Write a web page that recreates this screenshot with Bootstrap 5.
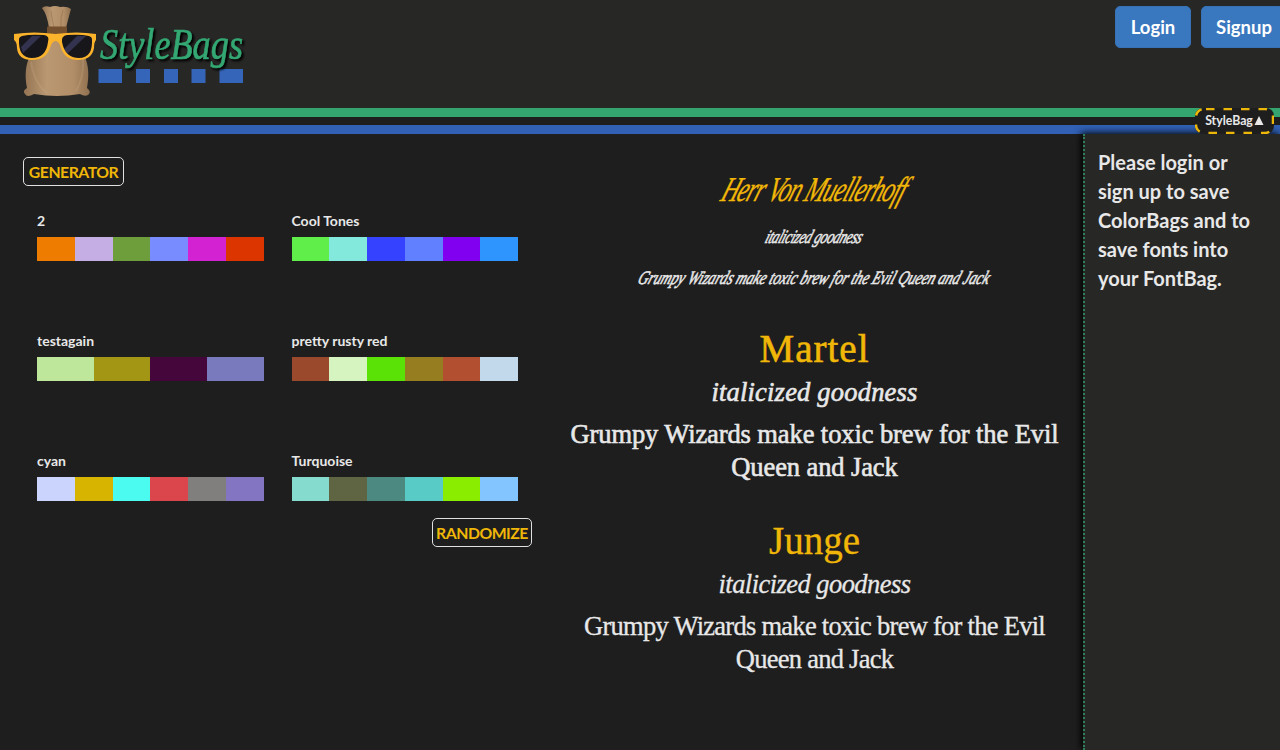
<!DOCTYPE html>
<html lang="en">
<head>
<meta charset="utf-8">
<title>StyleBags</title>
<link href="https://cdn.jsdelivr.net/npm/bootstrap@5.3.0/dist/css/bootstrap.min.css" rel="stylesheet">
<style>
body{background:#1e1e1e;color:#e8e8e8;font-family:Lato,"Open Sans",sans-serif;height:750px;overflow:hidden}
.masthead{height:108px;background:#272726}
.stripe-green{height:9px;background:#34a56f}
.stripe-gap{height:8px;background:#1e1e1e}
.stripe-blue{height:9px;background:#3160b4}
.logo{display:block;width:260px;height:108px;overflow:visible}
.logo text{filter:drop-shadow(2px 2px 1px #000)}
.auth{padding:6px 0 0;margin-right:-7px;gap:10px}
.btn-auth{--bs-btn-color:#fff;--bs-btn-bg:#3977be;--bs-btn-border-color:#3672b5;height:42px;padding:0 14px;border-radius:5px;font-weight:700;font-size:18.5px;line-height:40px;white-space:nowrap}
.btn-login{width:76px}
.btn-signup{width:86px}
.bag-tab{right:6px;top:0;width:79px;height:26px;z-index:3;background:#1e1e1e;border-radius:8px;font-size:12.3px;font-weight:700;line-height:26px}
.bag-tab .dashes{left:0;top:0}
.bag-tab span{position:relative}
.workspace{height:616px}
.palettes{width:546px;padding:23px 14px 0 23px}
.btn-pill{border:1px solid #e0e0e0;border-radius:5px;color:#f1b708;background:transparent;height:29px;width:101px;padding:0;font-size:15.8px;font-weight:700;line-height:28px;letter-spacing:-.5px}
.btn-random{width:100px;margin-top:-53px}
.palette-grid{display:grid;grid-template-columns:226.500px 226.500px;column-gap:28px;grid-auto-rows:120px;margin:25px 0 0 14px}
.palette-name{font-size:14px;font-weight:700;line-height:20px;margin-bottom:6px}
.swatches{height:24px}
.swatches div{flex:1 1 0}
.samples{width:537px}
.samples h2,.samples p{margin:0;white-space:nowrap}
.samples h2{color:#f1b708;font-weight:400}
.serif{font-family:"Liberation Serif",serif}
.script-face{font-family:"Liberation Serif",serif;font-style:italic;height:192px;padding-top:32px;-webkit-text-stroke:.4px}
.script-face h2{font-size:35px;line-height:48px;margin-bottom:2px;letter-spacing:-1.5px;transform:skewX(-20deg) scaleX(.67)}
.script-face p{font-size:19px;line-height:41px;letter-spacing:-.4px;transform:skewX(-20deg) scaleX(.7);-webkit-text-stroke:.6px}
.script-face p.line{letter-spacing:-.1px;transform:skewX(-20deg) scaleX(.75)}
.serif h2{font-size:39px;line-height:46px}
.serif em,.serif p{display:block;font-size:26.5px;line-height:33px}
.serif em{margin:4px 0 9px}
.martel{height:192px;-webkit-text-stroke:.6px}
.martel h2{letter-spacing:1px}
.martel em{letter-spacing:.2px}
.martel p{letter-spacing:-.1px}
.junge{-webkit-text-stroke:.3px}
.junge em{letter-spacing:-.55px}
.junge p{letter-spacing:-.73px}
.bag-panel{width:197px;background:#272726;border-left:2px dotted #2b7f5b;box-shadow:-2px -1px 7px #000;padding:14px 10px 0 13px;z-index:2;font-size:20px;font-weight:700;line-height:29px}
</style>
</head>
<body>
<header class="masthead d-flex justify-content-between">
<svg class="logo" viewBox="0 0 260 108" role="img" aria-label="StyleBags">
<defs>
<linearGradient id="sack"><stop stop-color="#947453"/><stop offset=".35" stop-color="#ba9872"/><stop offset=".75" stop-color="#b18e68"/><stop offset="1" stop-color="#8f704f"/></linearGradient>
</defs>
<path d="M42 8Q45 5 50 7Q55 5 60 7Q67 6 71 9Q70 12 66 28H49Q47 14 42 8Z" fill="url(#sack)"/>
<path d="M51 11Q52 20 54 27M63 10Q60 18 61 27" stroke="#94714f" fill="none" opacity=".6"/>
<path d="M48 33H66C83 48 92 62 87 88Q92 92 88 95Q85 97 80 94Q57 98 34 94Q27 98 25 94Q22 91 27 88C22 62 32 48 48 33Z" fill="url(#sack)"/>
<path d="M31 62Q34 83 47 93M83 59Q84 78 76 91" stroke="#cbad89" stroke-width="2" opacity=".25" fill="none"/>
<rect x="47" y="26.500" width="20" height="7.500" rx="1" fill="#74502e"/>
<path d="M18 38Q20 34 29 34H45Q52 34 50 42Q48 58 35 59H31Q18 59 18 38ZM93 38Q91 34 82 34H66Q59 34 61 42Q63 58 76 59H80Q93 59 93 38Z" fill="#17171b"/>
<path d="M21 47 32 36H41L23 53ZM64 49 77 36H86L67 54Z" fill="#34334f"/>
<path fill-rule="evenodd" d="M14 34Q34 31 55.500 34Q77 31 96 34V40Q94 42 94 48Q92 60 78 60Q65 60 61 48Q59 41 55.500 41T50 48Q46 60 32 60Q18 60 17 48Q17 42 14 40ZM19 39Q18 58 32 58Q46 58 48 42Q50 36 44 35Q30 34 22 36Q19 37 19 39ZM92 39Q93 58 79 58Q65 58 62 42Q61 36 67 35Q81 34 89 36Q92 37 92 39Z" fill="#fcb32c"/>
<path d="M98.500 69H122V83H98.500ZM136 69H150V83H136ZM164 69H178V83H164ZM191.500 69H205.500V83H191.500ZM219.500 69H243V83H219.500Z" fill="#3465b8"/>
<text x="100" y="58.500" textLength="143" lengthAdjust="spacingAndGlyphs" font-family="Liberation Serif" font-style="italic" font-size="45" fill="#34a873" stroke="#34a873" stroke-width=".7">StyleBags</text>
</svg>
<div class="auth d-flex align-items-start">
<button class="btn btn-auth btn-login">Login</button>
<button class="btn btn-auth btn-signup">Signup</button>
</div>
</header>
<div class="position-relative">
<div class="stripe-green"></div><div class="stripe-gap"></div><div class="stripe-blue"></div>
<div class="bag-tab position-absolute text-center">
<svg class="dashes position-absolute" width="79" height="26"><rect x="1" y="1" width="77" height="24" rx="8" fill="none" stroke="#edb70a" stroke-width="2.500" stroke-dasharray="8.500 9" stroke-dashoffset="-2"/></svg>
<span>StyleBag<svg width="10" height="9" viewBox="0 0 9 9" class="ms-1 align-baseline" style="margin-left:1px!important"><path d="M4.500 0 9 9H0Z" fill="#e8e8e8"/></svg></span>
</div>
</div>
<main class="workspace d-flex">
<section class="palettes flex-shrink-0">
<button class="btn btn-pill d-block">GENERATOR</button>
<div class="palette-grid">
<div><div class="palette-name">2</div><div class="swatches d-flex"><div style="background:#ee7c00"></div><div style="background:#c5aee4"></div><div style="background:#6e9e3c"></div><div style="background:#788bff"></div><div style="background:#d222d2"></div><div style="background:#dc3500"></div></div></div>
<div><div class="palette-name">Cool Tones</div><div class="swatches d-flex"><div style="background:#5fee4a"></div><div style="background:#83e9dd"></div><div style="background:#3542ff"></div><div style="background:#6080ff"></div><div style="background:#8000ef"></div><div style="background:#2e95ff"></div></div></div>
<div><div class="palette-name">testagain</div><div class="swatches d-flex"><div style="background:#bfe79b"></div><div style="background:#a39614"></div><div style="background:#45063c"></div><div style="background:#787abd"></div></div></div>
<div><div class="palette-name">pretty rusty red</div><div class="swatches d-flex"><div style="background:#9b492d"></div><div style="background:#d6f4bf"></div><div style="background:#5ae206"></div><div style="background:#967d20"></div><div style="background:#b24f31"></div><div style="background:#c2d8eb"></div></div></div>
<div><div class="palette-name">cyan</div><div class="swatches d-flex"><div style="background:#cbd4fc"></div><div style="background:#d7b400"></div><div style="background:#4cfbef"></div><div style="background:#db464c"></div><div style="background:#817e7e"></div><div style="background:#8375c2"></div></div></div>
<div><div class="palette-name">Turquoise</div><div class="swatches d-flex"><div style="background:#86dbcf"></div><div style="background:#5f6443"></div><div style="background:#4c8a81"></div><div style="background:#58cbc7"></div><div style="background:#8aed00"></div><div style="background:#82c5ff"></div></div></div>
</div>
<button class="btn btn-pill btn-random d-block ms-auto position-relative">RANDOMIZE</button>
</section>
<section class="samples flex-shrink-0 text-center">
<div class="script-face"><h2>Herr Von Muellerhoff</h2><p>italicized goodness</p><p class="line">Grumpy Wizards make toxic brew for the Evil Queen and Jack</p></div>
<div class="serif martel"><h2>Martel</h2><em>italicized goodness</em><p>Grumpy Wizards make toxic brew for the Evil<br>Queen and Jack</p></div>
<div class="serif junge"><h2>Junge</h2><em>italicized goodness</em><p>Grumpy Wizards make toxic brew for the Evil<br>Queen and Jack</p></div>
</section>
<aside class="bag-panel flex-shrink-0">Please login or<br>sign up to save<br>ColorBags and to<br>save fonts into<br>your FontBag.</aside>
</main>
<script src="https://cdn.jsdelivr.net/npm/bootstrap@5.3.0/dist/js/bootstrap.bundle.min.js"></script>
</body>
</html>
